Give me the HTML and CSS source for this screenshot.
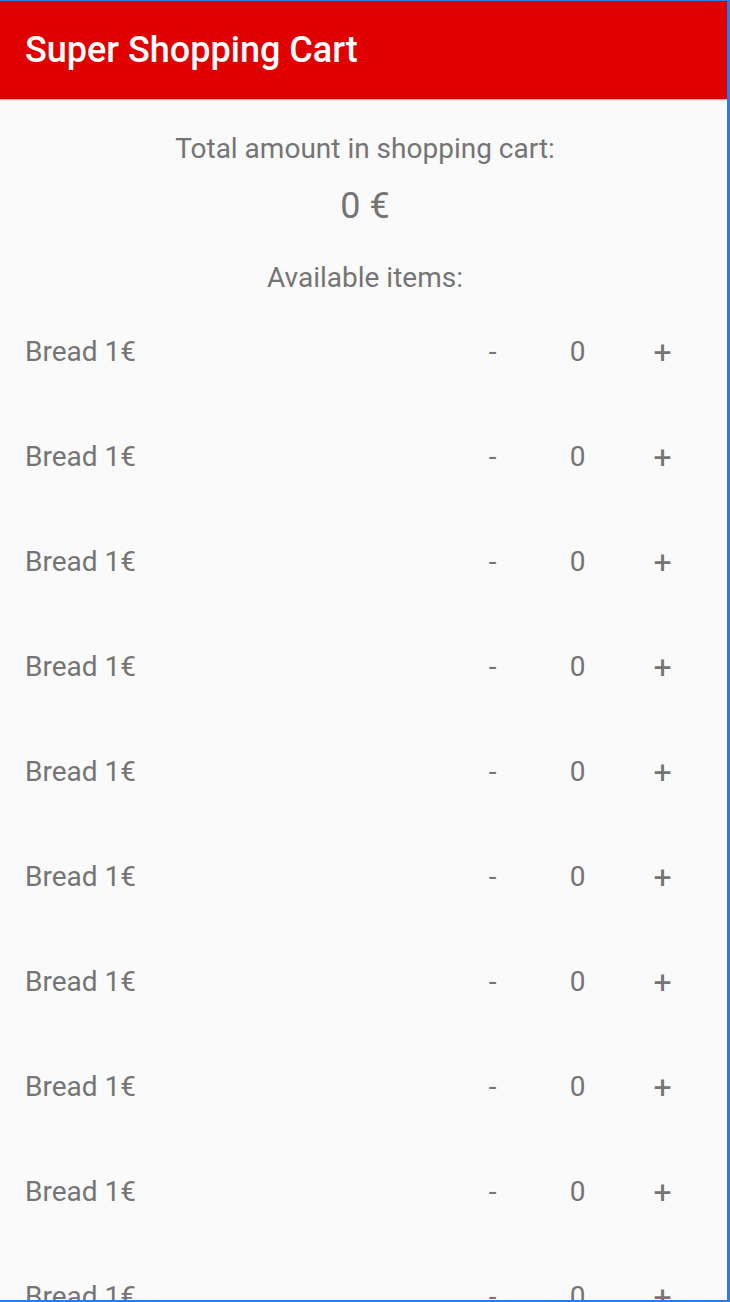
FILE: index.html
```html
<!DOCTYPE html>
<html>
<head>
<meta charset="utf-8">
<link rel="stylesheet" href="styles.css">
</head>
<body>
<div class="frame">
  <header class="appbar"><h1 class="title">Super Shopping Cart</h1></header>
  <main class="content">
    <p class="label">Total amount in shopping cart:</p>
    <p class="total">0 €</p>
    <p class="label avail">Available items:</p>
    <ul class="items">
      <li class="item"><span class="name">Bread 1€</span><span class="btn">-</span><span class="qty">0</span><span class="btn plus">+</span></li>
      <li class="item"><span class="name">Bread 1€</span><span class="btn">-</span><span class="qty">0</span><span class="btn plus">+</span></li>
      <li class="item"><span class="name">Bread 1€</span><span class="btn">-</span><span class="qty">0</span><span class="btn plus">+</span></li>
      <li class="item"><span class="name">Bread 1€</span><span class="btn">-</span><span class="qty">0</span><span class="btn plus">+</span></li>
      <li class="item"><span class="name">Bread 1€</span><span class="btn">-</span><span class="qty">0</span><span class="btn plus">+</span></li>
      <li class="item"><span class="name">Bread 1€</span><span class="btn">-</span><span class="qty">0</span><span class="btn plus">+</span></li>
      <li class="item"><span class="name">Bread 1€</span><span class="btn">-</span><span class="qty">0</span><span class="btn plus">+</span></li>
      <li class="item"><span class="name">Bread 1€</span><span class="btn">-</span><span class="qty">0</span><span class="btn plus">+</span></li>
      <li class="item"><span class="name">Bread 1€</span><span class="btn">-</span><span class="qty">0</span><span class="btn plus">+</span></li>
      <li class="item"><span class="name">Bread 1€</span><span class="btn">-</span><span class="qty">0</span><span class="btn plus">+</span></li>
    </ul>
  </main>
</div>
</body>
</html>
```
FILE: styles.css
```css
html, body {
  margin: 0;
  padding: 0;
  height: 100%;
  overflow: hidden;
  background: #fafafa;
}
.frame {
  box-sizing: border-box;
  height: 1302px;
  width: 730px;
  border-top: 1px solid #2a7be4;
  border-right: 3px solid #2a7be4;
  border-bottom: 2px solid #2a7be4;
  overflow: hidden;
  font-family: Roboto, "Liberation Sans", sans-serif;
  color: #757575;
  background: #fafafa;
}
.appbar {
  background: #e00000;
  height: 98px;
  display: flex;
  align-items: center;
  padding-left: 25px;
  box-shadow: 0 1px 1px rgba(224, 0, 0, 0.35);
}
.title {
  margin: 0;
  color: #ffffff;
  font-weight: 500;
  font-size: 36px;
}
.content {
  padding: 0 22px 0 25px;
}
.label {
  margin: 0;
  text-align: center;
  font-size: 28px;
  line-height: 34px;
}
.content > .label:first-child {
  margin-top: 33px;
}
.total {
  margin: 19px 0 0;
  text-align: center;
  font-size: 36px;
  line-height: 42px;
}
.avail {
  margin-top: 34px;
}
.items {
  list-style: none;
  margin: 4px 0 0;
  padding: 0;
}
.item {
  display: flex;
  align-items: center;
  height: 105px;
  font-size: 28px;
}
.name {
  flex: 1;
}
.btn, .qty {
  width: 85px;
  text-align: center;
}
.plus {
  font-size: 32px;
}
```
